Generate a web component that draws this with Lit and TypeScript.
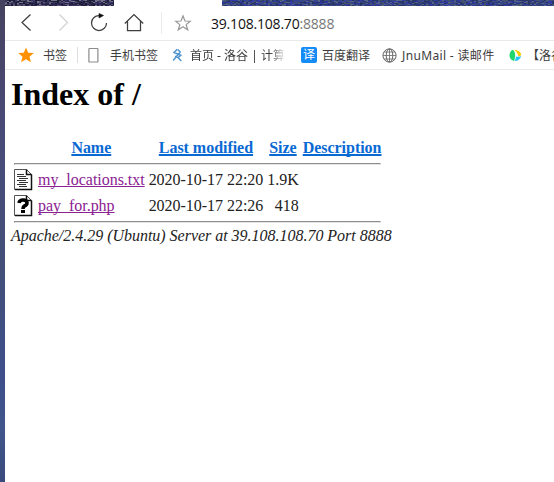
import { LitElement, html, svg, css } from "lit";
import { customElement } from "lit/decorators.js";

interface Entry { icon: "text" | "unknown"; name: string; modified: string; size: string; }

const entries: Entry[] = [
  { icon: "text", name: "my_locations.txt", modified: "2020-10-17 22:20", size: "1.9K" },
  { icon: "unknown", name: "pay_for.php", modified: "2020-10-17 22:26", size: "\u00a0418" },
];

const textures: Record<string, string[]> = {
  dusk: ["#222440", "#3b3a5c", "#5a5470", "#2b2352", "#75738c", "#343064", "#191b30"],
  blue: ["#273267", "#354782", "#3d4c7c", "#2b3590", "#55658a", "#2c3a68", "#353ba4", "#46546e"],
};

function speckle(width: number, tones: string[], seed: number) {
  const cells = [];
  let s = seed;
  for (let y = 0; y < 6; y++) {
    for (let x = 0; x < width; x += 2) {
      s ^= s << 13; s ^= s >>> 17; s ^= s << 5;
      cells.push(svg`<rect x=${x} y=${y} width="2" height="1" fill=${tones[(s >>> 8) % tones.length]}></rect>`);
    }
  }
  return html`<svg width=${width} height="6" shape-rendering="crispEdges">${cells}</svg>`;
}

@customElement("nav-bar")
class NavBar extends LitElement {
  static styles = css`
    :host { display: flex; align-items: center; height: 34px; border-bottom: 1px solid #e9e9e9; box-sizing: content-box; }
    svg { flex: none; fill: none; stroke: #3e3e3e; stroke-width: 1.25; }
    .back { margin-left: 16px; }
    .forward { margin-left: 26px; stroke: #d2d2d2; }
    .reload { margin-left: 19px; }
    .home { margin-left: 16px; }
    .rule { width: 1px; height: 22px; background: #ececec; margin-left: 17px; }
    .star { margin-left: 12px; stroke: #999; }
    .url { margin-left: 19px; font: 14px/20px "Open Sans", "Noto Sans", sans-serif; letter-spacing: -.2px; color: #111; white-space: nowrap; position: relative; top: 1px; }
    .port { color: #777; }
  `;
  render() {
    return html`
      <svg class="back" width="12" height="20"><path d="M9.5 1.5L1 9.5L9.5 17.5"></path></svg>
      <svg class="forward" width="12" height="20"><path d="M.5 1.5L8.5 9.5L.5 17.5"></path></svg>
      <svg class="reload" width="18" height="20"><path d="M9 2.5A7.5 7.5 0 1 0 16.5 10"></path><path d="M9 .5V5L13.5 2.5Z" fill="#111" stroke="#111" stroke-width=".6"></path></svg>
      <svg class="home" width="20" height="20"><path d="M.8 10.5L10 1.5L19.2 10.5M3.5 8.5V17.5H16.5V8.5"></path></svg>
      <span class="rule"></span>
      <svg class="star" width="18" height="18"><path d="M9 2L11 7L16.2 7.2L12.2 10.6L13.7 15.8L9 12.8L4.3 15.8L5.8 10.6L1.8 7.2L7 7Z"></path></svg>
      <span class="url">39.108.108.70<span class="port">:8888</span></span>
    `;
  }
}

@customElement("bookmark-bar")
class BookmarkBar extends LitElement {
  static styles = css`
    :host { display: flex; align-items: center; height: 28px; border-bottom: 1px solid #e9e9e9; overflow: hidden; color: #3d3d3d; font: 12px/18px "Noto Sans", "Noto Sans CJK SC", sans-serif; white-space: nowrap; }
    svg { flex: none; }
    .label { flex: none; padding-top: 2px; }
    .marks { margin-left: 13px; }
    .marks + .label { margin-left: 9px; width: 26px; }
    .rule { flex: none; width: 1px; height: 16px; background: #ddd; margin-left: 8px; }
    .phone { margin-left: 10px; }
    .phone + .label { margin-left: 11px; width: 50px; }
    .luogu { margin-left: 12px; }
    .luogu + .label { margin-left: 7px; width: 97px; overflow: hidden; -webkit-mask-image: linear-gradient(90deg, #000 82%, transparent 99%); mask-image: linear-gradient(90deg, #000 82%, transparent 99%); }
    .translate { flex: none; width: 16px; height: 16px; line-height: 15px; border-radius: 2px; background: #148bf5; color: #fff; text-align: center; margin-left: 14px; font-size: 12px; }
    .translate + .label { margin-left: 5px; width: 50px; }
    .globe { margin-left: 10px; }
    .globe + .label { margin-left: 5px; width: 94px; letter-spacing: .35px; }
    .pinwheel { margin-left: 13px; }
    .pinwheel + .label { margin-left: 5px; }
  `;
  render() {
    return html`
      <svg class="marks" width="16" height="16"><path d="M8 .5L10.2 5.7L15.8 6.1L11.5 9.7L12.9 15.2L8 12.2L3.1 15.2L4.5 9.7L.2 6.1L5.8 5.7Z" fill="#ff9100"></path></svg>
      <span class="label">书签</span><span class="rule"></span>
      <svg class="phone" width="11" height="16"><rect x=".9" y="1.5" width="9" height="13.5" rx=".6" fill="none" stroke="#8b8b8b" stroke-width="1.2"></rect></svg>
      <span class="label">手机书签</span>
      <svg class="luogu" width="11" height="14"><path d="M5.3 1.3L2 4.4L8.8 7.2L6 9.6L9.3 13M5.8 1.5L8.2 4L1.2 12.4M3 8.2L6 9.6" fill="none" stroke="#5295cf" stroke-width="1.5"></path></svg>
      <span class="label">首页 - 洛谷 | 计算机</span>
      <span class="translate">译</span><span class="label">百度翻译</span>
      <svg class="globe" width="15" height="15" fill="none" stroke="#666"><circle cx="7.5" cy="7.5" r="6.6"></circle><ellipse cx="7.5" cy="7.5" rx="3.3" ry="6.6"></ellipse><path d="M7.5 1V14M1 7.5H14M2 4H13M2 11H13" stroke-width=".8"></path></svg>
      <span class="label">JnuMail - 读邮件</span>
      <svg class="pinwheel" width="13" height="13"><path d="M3.8 .8Q6.4 3 6.2 7.2L5.2 12Q.5 11.2 .5 6Q.8 2 3.8 .8Z" fill="#20d56b"></path><path d="M5 .8Q11.8 1.4 12.3 6.2L9.4 7.4Q8.4 2.8 5 .8Z" fill="#ffc800"></path><path d="M12.2 7Q10.5 12 6 12L7 7.4Q9.8 8.4 12.2 7Z" fill="#22c4fb"></path></svg>
      <span class="label">【洛谷</span>
    `;
  }
}

@customElement("directory-index")
class DirectoryIndex extends LitElement {
  static styles = css`
    :host { display: block; padding: 6px 0 0 6px; color: #000; font: 16px "Liberation Serif", serif; }
    h1 { margin: 0 0 22px; font-size: 32px; line-height: 36px; }
    table { border-spacing: 2px; border-collapse: separate; letter-spacing: -.03px; }
    th, td { padding: 1px; line-height: 18px; white-space: nowrap; }
    td { color: #222; }
    .icon { vertical-align: top; }
    .icon svg { display: block; }
    .blank { width: 20px; height: 22px; }
    .size { text-align: right; }
    .line { height: 2px; line-height: 0; }
    hr { margin: 0; border: 1px solid; border-color: #8f8f8f #e4e4e4 #e4e4e4 #8f8f8f; }
    a { color: #0969d3; text-decoration: underline; text-decoration-skip-ink: none; }
    th a { text-decoration-thickness: 1.6px; }
    td a { color: #8b2292; }
    address { font-style: italic; line-height: 20px; color: #222; letter-spacing: -.02px; }
  `;
  icon(kind: Entry["icon"]) {
    const mark = kind === "text"
      ? svg`<path d="M3 5.5H10M3 7.5H12M5 9.5H14M3 11.5H12M5 13.5H14M3 15.5H12M5 17.5H13" stroke="#333" stroke-width="1.2"></path>`
      : svg`<path d="M5 8Q5.5 5 9 5Q13 5 13 8Q13 10 10.5 11Q9 11.7 9 14" stroke="#000" stroke-width="3.6"></path><rect x="7" y="15" width="4" height="3" fill="#000"></rect>`;
    return html`<svg width="20" height="22" fill="none"><path d="M.5 .5H12.5L17.5 5.5V20.5H.5Z" fill="#fff" stroke="#555"></path><path d="M12.5 .5V5.5H17.5M17.5 5.5V20.5H1" stroke="#111" stroke-width="1.5"></path>${mark}</svg>`;
  }
  render() {
    return html`
      <h1>Index of /</h1>
      <table>
        <tr><th class="icon"><div class="blank"></div></th>${["Name", "Last modified", "Size", "Description"].map((t) => html`<th><a>${t}</a></th>`)}</tr>
        <tr><th class="line" colspan="5"><hr></th></tr>
        ${entries.map((e) => html`<tr><td class="icon">${this.icon(e.icon)}</td><td><a>${e.name}</a></td><td>${e.modified}</td><td class="size">${e.size}</td><td></td></tr>`)}
        <tr><th class="line" colspan="5"><hr></th></tr>
      </table>
      <address>Apache/2.4.29 (Ubuntu) Server at 39.108.108.70 Port 8888</address>
    `;
  }
}

@customElement("app-root")
class AppRoot extends LitElement {
  static styles = css`
    :host { display: flex; width: 554px; height: 482px; overflow: hidden; background: #fff; }
    .edge { flex: none; width: 5px; background: linear-gradient(#45425f 0, #49466d 70px, #484b78 140px, #434f78 260px, #3e4f8c 380px, #40568a 430px, #3a4a7c 482px); }
    .window { flex: 1; min-width: 0; }
    .backdrop { display: flex; justify-content: space-between; height: 6px; }
    .backdrop svg { display: block; }
  `;
  render() {
    return html`
      <div class="edge"></div>
      <div class="window">
        <div class="backdrop">${speckle(109, textures.dusk, 71031)}${speckle(332, textures.blue, 19553)}</div>
        <nav-bar></nav-bar>
        <bookmark-bar></bookmark-bar>
        <directory-index></directory-index>
      </div>
    `;
  }
}
